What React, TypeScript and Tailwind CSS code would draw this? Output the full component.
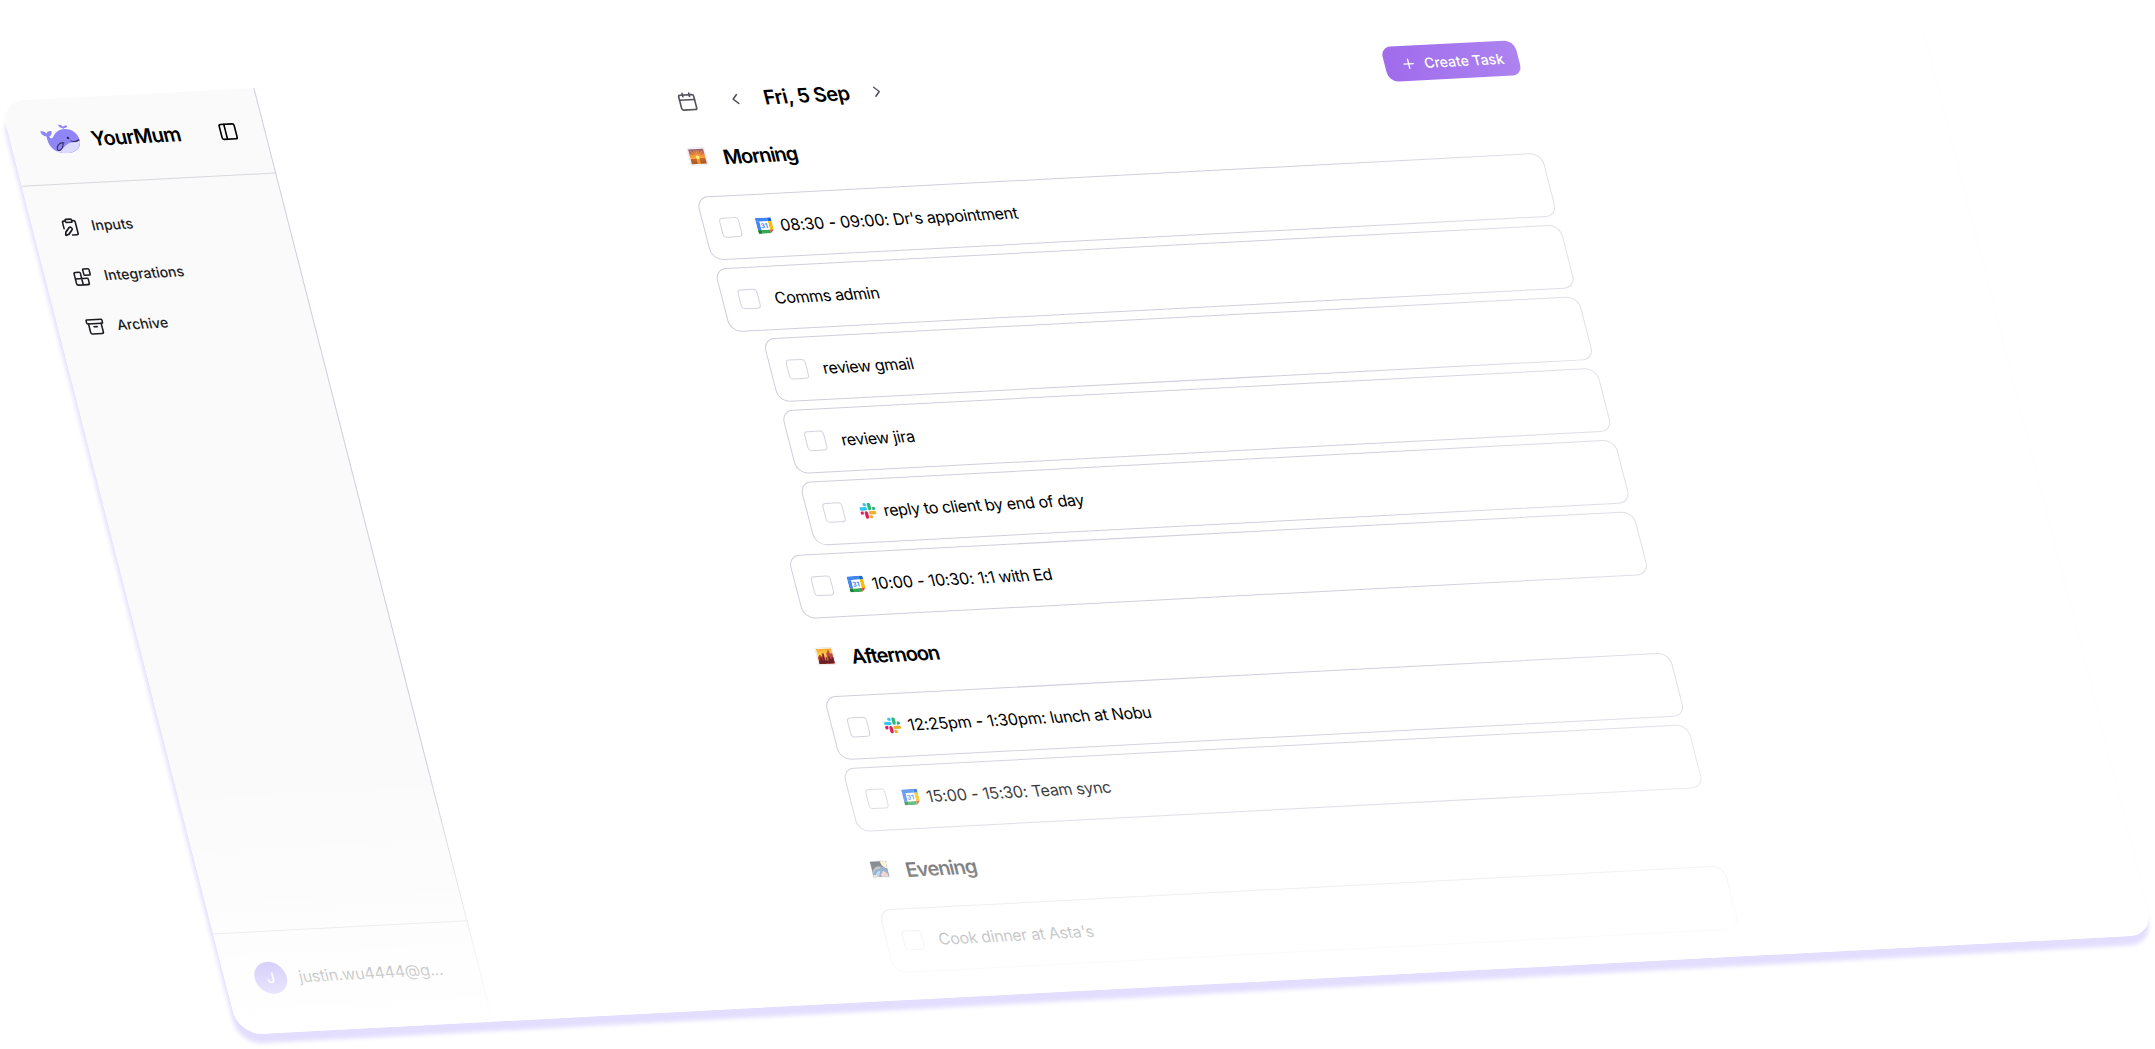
import React from "react";
import {
  Archive,
  Blocks,
  Calendar,
  ChevronLeft,
  ChevronRight,
  ClipboardPen,
  PanelLeft,
  Plus,
} from "lucide-react";

type Source = "calendar" | "slack";
type Task = { time?: string; title: string; source?: Source; nested?: boolean };
type Section = { title: string; icon: React.ReactNode; tasks: Task[] };

function WhaleLogo() {
  return (
    <svg viewBox="0 0 37 29" className="mb-1 h-[29px] w-[37px] shrink-0">
      <path
        d="M0 6.2C2.600 5.600 5 6.500 5.900 8.800C6.500 6.800 8.500 5.600 11.300 6.200C11.300 9 9.800 11 7.800 11.600C8 13 9 13.800 10.200 13.400C13 11.500 15 5.200 24.500 5C32 5 37 10 37 17C37 24.500 30 29 21 29C11 29 5 23.500 5 14.500C5 13 5 12.300 5 11.500C2.200 11.300 .3 9 0 6.200Z"
        fill="#9085f6"
      />
      <path
        d="M36.800 17.200C36.500 24.300 30 29 21 29C17 29 13.600 28 11 26.300C19 26.500 20.500 19.600 28 18.600C31.500 18.600 34.500 18.200 36.800 17.200Z"
        fill="#dcdafe"
      />
      <path
        d="M23.500 5C23.300 3.600 22 3.300 21 3.100C19.900 2.700 19.300 1.500 19.600 .2C21.800 .3 23.400 1.300 23.700 3.200C24.200 1.600 26 .9 28.400 1.700C27.800 3.500 26.200 4.200 24.700 4C24.200 4.200 23.800 4.600 23.500 5Z"
        fill="#9085f6"
      />
      <path
        d="M20.700 18.600C17 17.800 13.500 20.500 12.700 23.600C12.200 26 14.300 26.600 16.200 25.200C18.400 23.600 19.300 21.400 19.600 19.500"
        fill="none"
        stroke="#2b2556"
        strokeWidth="1"
        strokeLinecap="round"
      />
      <path
        d="M28 17C30.500 18.200 34 17.900 36.600 16.300"
        fill="none"
        stroke="#2b2556"
        strokeWidth="1"
        strokeLinecap="round"
      />
      <circle cx="25.900" cy="14" r="1.200" fill="#2b2556" />
    </svg>
  );
}

function SunriseIcon() {
  return (
    <svg viewBox="0 0 18 18" className="-ml-px mb-[3px] mr-px size-[18px] shrink-0">
      <defs>
        <linearGradient id="sunrise" x1="0" y1="0" x2="0" y2="1">
          <stop offset="0" stopColor="#8b5a78" />
          <stop offset=".35" stopColor="#e2703a" />
          <stop offset=".62" stopColor="#fbb03b" />
          <stop offset=".64" stopColor="#c8682c" />
          <stop offset="1" stopColor="#a8552f" />
        </linearGradient>
      </defs>
      <rect x=".25" y=".25" width="17.500" height="17.500" fill="#f6f5f8" stroke="#dcdbe3" strokeWidth=".5" />
      <rect x="1.500" y="1.500" width="15" height="15" fill="url(#sunrise)" />
      <path
        d="M9 10.500L3 3M9 10.500L6.500 2.500M9 10.500V2M9 10.500L11.500 2.500M9 10.500L15 3M9 10.500L2 7M9 10.500L16 7"
        stroke="#ffc04d"
        strokeWidth=".7"
        opacity=".7"
      />
      <circle cx="9" cy="10" r="1.900" fill="#ffe768" />
      <rect x="7.300" y="11.500" width="3.400" height="5" fill="#f4a733" opacity=".8" />
    </svg>
  );
}

function SunsetCityIcon() {
  return (
    <svg viewBox="0 0 18 18" className="-ml-px mb-[3px] mr-px size-[18px] shrink-0">
      <defs>
        <linearGradient id="sunset" x1="0" y1="0" x2="0" y2="1">
          <stop offset="0" stopColor="#f9a825" />
          <stop offset=".4" stopColor="#ffd54a" />
          <stop offset="1" stopColor="#e0552e" />
        </linearGradient>
      </defs>
      <rect x=".25" y=".25" width="17.500" height="17.500" fill="#f6f5f8" stroke="#dcdbe3" strokeWidth=".5" />
      <rect x="1.500" y="1.500" width="15" height="15" fill="url(#sunset)" />
      <path d="M1.500 9H3V7.500H4.500V9H6V6H8V16.500H1.500Z" fill="#a3332c" />
      <path d="M10.500 5.500H12V3.500H14V6.500H16.500V16.500H10.500Z" fill="#c04a4a" />
      <path d="M1.500 13H3.500V10.500H5V13H6.500V8H7.500V13H9V10H10V13.500H11.500V9.500H13V12H14.500V10.500H16.500V16.500H1.500Z" fill="#6b1f26" />
    </svg>
  );
}

function NightIcon() {
  return (
    <svg viewBox="0 0 18 18" className="-ml-px mb-[3px] mr-px size-[18px] shrink-0">
      <rect x=".25" y=".25" width="17.500" height="17.500" fill="#f4f4f8" stroke="#dcdbe3" strokeWidth=".5" />
      <rect x="1" y="1" width="15.500" height="15.500" fill="#1c222c" />
      <path d="M11 1H16.500V8.500C13.500 8 11 5 11 1Z" fill="#fbe9b0" />
      <path d="M1 12C3 5.500 10 3.500 16.500 10V16.500H1Z" fill="#2463a8" />
      <path d="M1.500 11C4 6 8 5 11 7L9 9C6 8 4 9 1.500 13Z" fill="#8a887c" />
      <path d="M3 16.500C4 12 7 10 9 11L6 16.500Z" fill="#7fb3e2" />
      <path d="M9 14L12 10.500L15.500 14V16.500H9Z" fill="#f0a890" />
      <path d="M1 14.500H4V16.500H1Z" fill="#f1d36b" />
    </svg>
  );
}

function GoogleCalendarIcon() {
  return (
    <svg viewBox="0 0 16 16" className="size-4 shrink-0">
      <path d="M1.200 0H12.200V3.800H0V1.200C0 .5 .5 0 1.200 0Z" fill="#4285f4" />
      <path d="M0 3.800H3.800V12.200H0Z" fill="#4285f4" />
      <path d="M12.200 0H14.800C15.500 0 16 .5 16 1.200V3.800H12.200Z" fill="#1967d2" />
      <path d="M12.200 3.800H16V12.200H12.200Z" fill="#fbbc04" />
      <path d="M3.800 12.200H12.200V16H3.800Z" fill="#34a853" />
      <path d="M0 12.200H3.800V16H1.200C.5 16 0 15.500 0 14.800Z" fill="#188038" />
      <path d="M12.200 12.200H16L12.200 16Z" fill="#ea4335" />
      <rect x="3.800" y="3.800" width="8.400" height="8.400" fill="#fff" />
      <text
        x="8"
        y="10.500"
        textAnchor="middle"
        fontFamily="Roboto"
        fontSize="6.800"
        fontWeight="700"
        fill="#4285f4"
      >
        31
      </text>
    </svg>
  );
}

function SlackIcon() {
  return (
    <svg viewBox="0 0 24 24" className="size-4 shrink-0">
      <path
        fill="#e01e5a"
        d="M5.042 15.165a2.528 2.528 0 0 1-2.520 2.523A2.528 2.528 0 0 1 0 15.165a2.527 2.527 0 0 1 2.522-2.520h2.520v2.520zM6.313 15.165a2.527 2.527 0 0 1 2.521-2.520 2.527 2.527 0 0 1 2.521 2.520v6.313A2.528 2.528 0 0 1 8.834 24a2.528 2.528 0 0 1-2.521-2.522v-6.313z"
      />
      <path
        fill="#36c5f0"
        d="M8.834 5.042a2.528 2.528 0 0 1-2.521-2.520A2.528 2.528 0 0 1 8.834 0a2.528 2.528 0 0 1 2.521 2.522v2.520H8.834zM8.834 6.313a2.528 2.528 0 0 1 2.521 2.521 2.528 2.528 0 0 1-2.521 2.521H2.522A2.528 2.528 0 0 1 0 8.834a2.528 2.528 0 0 1 2.522-2.521h6.312z"
      />
      <path
        fill="#2eb67d"
        d="M18.956 8.834a2.528 2.528 0 0 1 2.522-2.521A2.528 2.528 0 0 1 24 8.834a2.528 2.528 0 0 1-2.522 2.521h-2.522V8.834zM17.688 8.834a2.528 2.528 0 0 1-2.523 2.521 2.527 2.527 0 0 1-2.520-2.521V2.522A2.527 2.527 0 0 1 15.165 0a2.528 2.528 0 0 1 2.523 2.522v6.312z"
      />
      <path
        fill="#ecb22e"
        d="M15.165 18.956a2.528 2.528 0 0 1 2.523 2.522A2.528 2.528 0 0 1 15.165 24a2.527 2.527 0 0 1-2.520-2.522v-2.522h2.520zM15.165 17.688a2.527 2.527 0 0 1-2.520-2.523 2.526 2.526 0 0 1 2.520-2.520h6.313A2.527 2.527 0 0 1 24 15.165a2.528 2.528 0 0 1-2.522 2.523h-6.313z"
      />
    </svg>
  );
}

const sections: Section[] = [
  {
    title: "Morning",
    icon: <SunriseIcon />,
    tasks: [
      { time: "08:30 - 09:00: ", title: "Dr's appointment", source: "calendar" },
      { title: "Comms admin" },
      { title: "review gmail", nested: true },
      { title: "review jira", nested: true },
      { title: "reply to client by end of day", source: "slack", nested: true },
      { time: "10:00 - 10:30: ", title: "1:1 with Ed", source: "calendar" },
    ],
  },
  {
    title: "Afternoon",
    icon: <SunsetCityIcon />,
    tasks: [
      { time: "12:25pm - 1:30pm: ", title: "lunch at Nobu", source: "slack" },
      { time: "15:00 - 15:30: ", title: "Team sync", source: "calendar" },
    ],
  },
  {
    title: "Evening",
    icon: <NightIcon />,
    tasks: [{ title: "Cook dinner at Asta's" }],
  },
];

const navItems = [
  { label: "Inputs", Icon: ClipboardPen },
  { label: "Integrations", Icon: Blocks },
  { label: "Archive", Icon: Archive },
];

function TaskRow({ task }: { task: Task }) {
  return (
    <div
      className={
        "flex h-16 items-center gap-4 rounded-xl border border-[#cfcedc] bg-white px-4 " +
        (task.nested ? "ml-[30px]" : "")
      }
    >
      <div className="size-5 shrink-0 rounded border border-[#d3d2df]" />
      <div className="flex items-center gap-2">
        {task.source === "calendar" && <GoogleCalendarIcon />}
        {task.source === "slack" && <SlackIcon />}
        <span className="whitespace-pre text-base leading-6 tracking-[-0.34px] text-black">
          {task.time && <span className="tracking-[-0.12px]">{task.time}</span>}
          {task.title}
        </span>
      </div>
    </div>
  );
}

function Sidebar() {
  return (
    <aside className="flex w-[255px] shrink-0 flex-col border-r border-[#cfcedb] bg-[#fafafa]">
      <div className="flex h-[85.5px] shrink-0 items-center border-b border-[#d8d8de] pl-8 pr-[26px]">
        <WhaleLogo />
        <span className="ml-3 text-xl font-semibold tracking-[-0.65px] text-black">YourMum</span>
        <PanelLeft className="ml-auto size-5 text-black" />
      </div>
      <nav className="flex flex-col pt-[17.5px]">
        {navItems.map(({ label, Icon }) => (
          <div key={label} className="flex h-[50px] items-center gap-3 pl-7 text-[#1c1c22]">
            <Icon className="size-[19px]" />
            <span className="text-sm font-medium">{label}</span>
          </div>
        ))}
      </nav>
      <div className="mt-auto flex h-[102px] shrink-0 items-start gap-3 border-t border-[#cfcedb] pl-[30px] pt-[30px]">
        <div className="flex size-8 shrink-0 items-center justify-center rounded-full bg-[#6b4ff0] text-sm font-medium text-white">
          J
        </div>
        <span className="leading-8 tracking-[-0.22px] text-black">justin.wu4444@g...</span>
      </div>
    </aside>
  );
}

export default function App() {
  return (
    <div className="h-[1049px] w-[2155px] overflow-hidden bg-white font-['Inter',sans-serif]">
      <div className="relative flex h-[938px] w-[1920px] origin-top-left overflow-hidden rounded-3xl bg-white shadow-[-2.5px_9.5px_4px_#e4defe] [transform:matrix(0.9975,-0.0522,0.2547,0.9955,0,101.2)]">
        <Sidebar />
        <main className="flex flex-1 justify-center">
          <div className="w-[848px] pt-[17.5px]">
            <header className="-mb-[0.7px] flex h-9 items-center pl-1.5">
              <Calendar className="size-5 text-[#52525b]" />
              <ChevronLeft className="ml-[29px] size-[18px] text-[#52525b]" />
              <h1 className="ml-5 text-xl font-semibold tracking-tight text-black">Fri, 5 Sep</h1>
              <ChevronRight className="ml-[19px] size-[18px] text-[#52525b]" />
              <button className="-mr-px ml-auto flex h-[35px] w-[134px] items-center gap-2 whitespace-nowrap rounded-[10px] bg-linear-to-r from-[#8d4de8] to-[#7c39e7] pl-4 text-sm font-medium text-white">
                <Plus className="size-4 shrink-0" />
                Create Task
              </button>
            </header>
            {sections.map((section) => (
              <section key={section.title} className="mt-[26px]">
                <h2 className="mb-6 flex h-7 items-center gap-4 pl-1 text-xl font-semibold tracking-[-1.05px] text-black">
                  {section.icon}
                  {section.title}
                </h2>
                <div className="flex flex-col gap-2">
                  {section.tasks.map((task) => (
                    <TaskRow key={task.title} task={task} />
                  ))}
                </div>
              </section>
            ))}
          </div>
        </main>
        <div className="pointer-events-none absolute inset-0 bg-linear-to-r from-white/0 from-[66%] to-white" />
        <div className="pointer-events-none absolute inset-0 bg-linear-to-b from-white/0 from-[72%] to-white" />
      </div>
    </div>
  );
}
